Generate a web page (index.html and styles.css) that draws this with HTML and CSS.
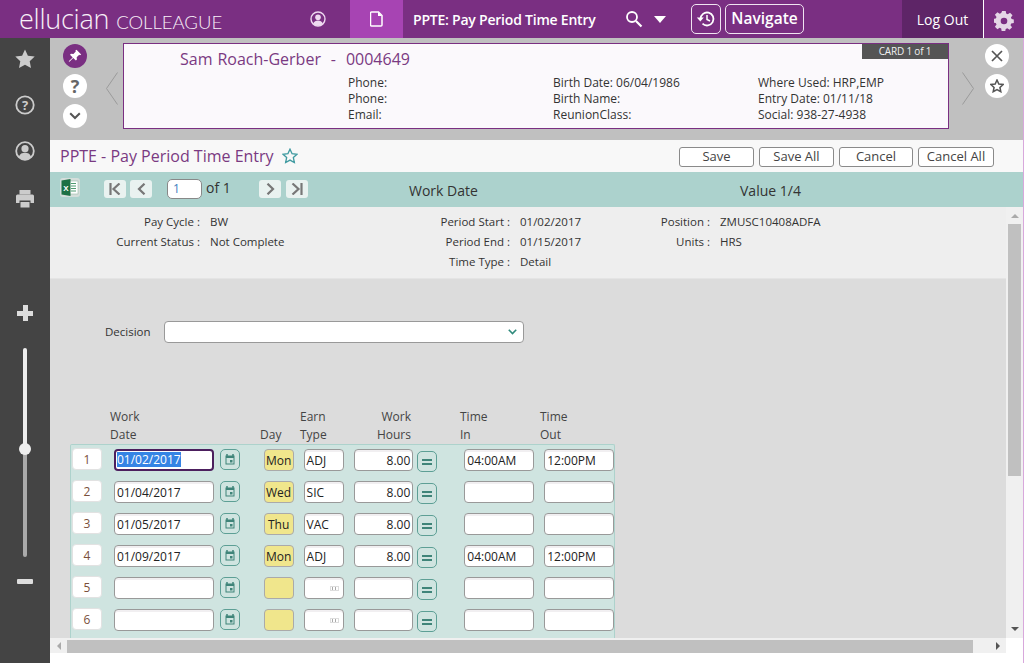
FILE: index.html
```html
<!DOCTYPE html>
<html lang="en">
<head>
<meta charset="UTF-8" />
<title>PPTE: Pay Period Time Entry</title>
<link rel="stylesheet" href="styles.css">
</head>
<body>

<header class="topbar">
  <div class="logo"><span class="logo-main">ellucian</span><span class="logo-sub">COLLEAGUE</span></div>
  <svg class="top-user" width="16" height="16" viewBox="0 0 16 16"><circle cx="8" cy="8" r="7" fill="none" stroke="#eed9f0" stroke-width="1.4"/><circle cx="8" cy="6.2" r="2.8" fill="#eed9f0"/><path d="M3 13c1-3 3-3.6 5-3.6s4 .6 5 3.6c-1.400 1.200-3 1.800-5 1.800s-3.600-.6-5-1.800z" fill="#eed9f0"/></svg>
  <div class="doc-tab"><svg width="13" height="16" viewBox="0 0 13 16"><path d="M1.500 1h7l3.500 3.500v9.500a1 1 0 0 1-1 1h-9.500a1 1 0 0 1-1-1v-12a1 1 0 0 1 1-1z" fill="none" stroke="#fff" stroke-width="1.500"/><path d="M8 1v4h4z" fill="#fff"/></svg></div>
  <div class="top-title">PPTE: Pay Period Time Entry</div>
  <svg class="top-search" width="18" height="18" viewBox="0 0 18 18"><circle cx="7" cy="7" r="5" fill="none" stroke="#fff" stroke-width="1.800"/><path d="M11 11l5.500 5.500" stroke="#fff" stroke-width="2.200"/></svg>
  <div class="top-caret"></div>
  <div class="top-history"><svg width="20" height="18" viewBox="0 0 20 18"><path d="M4.500 9a6.500 6.500 0 1 1 2 4.700" fill="none" stroke="#fff" stroke-width="1.800"/><path d="M0.800 7.500h7l-3.500 4z" fill="#fff"/><path d="M11 5v4.500l3 1.500" fill="none" stroke="#fff" stroke-width="1.500"/></svg></div>
  <div class="top-nav">Navigate</div>
  <div class="logout">Log Out</div>
  <div class="top-gear"><svg width="20" height="20" viewBox="0 0 20 20"><path d="M8 0h4l.5 3 1.800.8 2.500-1.800 2.800 2.800-1.800 2.500.8 1.700 2.400.5v4l-2.900.5-.8 1.800 1.800 2.400-2.800 2.800-2.500-1.800-1.800.8-.5 2.500h-4l-.5-3-1.700-.7-2.500 1.700-2.800-2.800 1.800-2.500-.8-1.800-3-.5v-4l3-.5.8-1.700-1.800-2.500 2.800-2.800 2.500 1.800 1.700-.8z" transform="scale(.9) translate(1 -.1)" fill="#e4d6e6"/><circle cx="10" cy="10" r="3.300" fill="#7a2f82"/></svg></div>
</header>

<div class="layout">
  <nav class="sidebar">
    <svg class="side-icon" width="20" height="20" viewBox="0 0 20 20"><path d="M10 .5l2.900 6.300 6.800.8-5 4.700 1.300 6.800-6-3.400-6 3.400 1.300-6.800-5-4.700 6.800-.8z" fill="#ccc"/></svg>
    <svg class="side-icon" width="20" height="20" viewBox="0 0 20 20"><circle cx="10" cy="10" r="8.700" fill="none" stroke="#ccc" stroke-width="1.800"/><text x="10" y="14.500" text-anchor="middle" font-size="13" font-weight="700" font-family="Open Sans" fill="#ccc">?</text></svg>
    <svg class="side-icon user-icon" width="20" height="20" viewBox="0 0 20 20"><circle cx="10" cy="10" r="8.800" fill="none" stroke="#ccc" stroke-width="1.800"/><circle cx="10" cy="7.700" r="3.600" fill="#ccc"/><path d="M3.800 16c1-3.400 3.500-4.300 6.200-4.300s5.200.9 6.200 4.300c-1.600 1.600-3.800 2.600-6.200 2.600s-4.600-1-6.200-2.600z" fill="#ccc"/></svg>
    <svg class="side-icon" width="20" height="20" viewBox="0 0 20 20"><path d="M4.500 1h11v4.500h-11z" fill="#ccc"/><path d="M1 7a1.500 1.500 0 0 1 1.500-1.500h15a1.500 1.500 0 0 1 1.500 1.500v7h-3.500v-2.500h-11v2.500h-3.500z" fill="#ccc"/><path d="M5.500 13h9v5.500h-9z" fill="#ccc"/></svg>
    <div class="zoom-plus"></div>
    <div class="zoom-track"><div class="zoom-knob"></div></div>
    <div class="zoom-minus"></div>
  </nav>

  <div class="content">
    <section class="card-strip">
      <div class="round-col">
        <div class="round round-pin"><svg width="14" height="14" viewBox="0 0 14 14"><path d="M8.500.8l4.700 4.700-1.200.7-.8-.4-2.500 2.400.2 2.400-1 1-2.700-2.700-3.500 3.700-.9.200.2-.9 3.700-3.500-2.700-2.700 1-1 2.400.2 2.400-2.500-.4-.8z" fill="#fff"/></svg></div>
        <div class="round round-q">?</div>
        <div class="round"><svg width="12" height="8" viewBox="0 0 12 8"><path d="M1.200 1.200l4.800 4.800 4.800-4.800" fill="none" stroke="#555" stroke-width="2"/></svg></div>
      </div>
      <svg class="chev chev-left" width="12" height="34" viewBox="0 0 12 34"><path d="M11.500 .5l-11 16 11 16" fill="none" stroke="#9a9a9a"/></svg>
      <div class="card">
        <div class="card-tag">CARD 1 of 1</div>
        <div class="card-name">Sam Roach-Gerber &nbsp;-&nbsp; 0004649</div>
        <div class="card-grid">
          <div>Phone:</div><div>Birth Date: 06/04/1986</div><div>Where Used: HRP,EMP</div>
          <div>Phone:</div><div>Birth Name:</div><div>Entry Date: 01/11/18</div>
          <div>Email:</div><div>ReunionClass:</div><div>Social: 938-27-4938</div>
        </div>
      </div>
      <svg class="chev chev-right" width="12" height="34" viewBox="0 0 12 34"><path d="M.5 .5l11 16-11 16" fill="none" stroke="#9a9a9a"/></svg>
      <div class="round-col round-col-right">
        <div class="round"><svg width="12" height="12" viewBox="0 0 12 12"><path d="M1 1l10 10M11 1l-10 10" stroke="#555" stroke-width="1.700"/></svg></div>
        <div class="round"><svg width="14" height="14" viewBox="0 0 20 20"><path d="M10 1.500l2.600 5.600 6.100.7-4.500 4.200 1.200 6.100-5.400-3-5.400 3 1.200-6.100-4.500-4.200 6.100-.7z" fill="none" stroke="#555" stroke-width="2.200"/></svg></div>
      </div>
    </section>

    <section class="title-bar">
      <h1 class="page-title">PPTE - Pay Period Time Entry</h1>
      <svg class="title-star" width="16" height="16" viewBox="0 0 20 20"><path d="M10 1.500l2.600 5.600 6.100.7-4.500 4.200 1.200 6.100-5.400-3-5.400 3 1.200-6.100-4.500-4.200 6.100-.7z" fill="none" stroke="#3f9aa0" stroke-width="1.700"/></svg>
      <div class="title-actions">
        <button class="btn btn-save">Save</button>
        <button class="btn btn-saveall">Save All</button>
        <button class="btn btn-cancel">Cancel</button>
        <button class="btn btn-cancelall">Cancel All</button>
      </div>
    </section>

    <section class="pager-bar">
      <svg class="excel" width="20" height="19" viewBox="0 0 20 19"><rect x="0" y="0" width="20" height="19" rx="3" fill="#d5dedb"/><rect x="9" y="3" width="9" height="13" fill="#fff" stroke="#9cb8a8" stroke-width=".6"/><path d="M11 5.500h5M11 8h5M11 10.500h5M11 13h5" stroke="#4f9a70"/><path d="M1.500 2.500l9-1.500v17l-9-1.500z" fill="#1d7044"/><text x="6" y="13" text-anchor="middle" font-family="Liberation Sans" font-weight="700" font-size="8" fill="#fff">X</text></svg>
      <div class="page-btn page-first"><svg width="12" height="12" viewBox="0 0 12 12"><path d="M1.500 0v12" stroke="#777" stroke-width="2.200"/><path d="M10.500 .5l-6 5.500 6 5.500" fill="none" stroke="#777" stroke-width="2.200"/></svg></div>
      <div class="page-btn page-prev"><svg width="9" height="12" viewBox="0 0 9 12"><path d="M7.500 .7l-5.500 5.300 5.500 5.300" fill="none" stroke="#777" stroke-width="2.200"/></svg></div>
      <div class="page-input">1</div>
      <div class="page-of">of 1</div>
      <div class="page-btn page-next"><svg width="9" height="12" viewBox="0 0 9 12"><path d="M1.500 .7l5.500 5.300-5.500 5.300" fill="none" stroke="#777" stroke-width="2.200"/></svg></div>
      <div class="page-btn page-last"><svg width="12" height="12" viewBox="0 0 12 12"><path d="M10.500 0v12" stroke="#777" stroke-width="2.200"/><path d="M1.500 .5l6 5.500-6 5.500" fill="none" stroke="#777" stroke-width="2.200"/></svg></div>
      <div class="pager-date">Work Date</div>
      <div class="pager-value">Value 1/4</div>
    </section>

    <div class="scroll-wrap">
      <div class="scroll-main">
        <section class="info">
          <div class="info-col info-col-1">
            <div class="info-row"><span class="info-label">Pay Cycle :</span><span>BW</span></div>
            <div class="info-row"><span class="info-label">Current Status :</span><span>Not Complete</span></div>
          </div>
          <div class="info-col info-col-2">
            <div class="info-row"><span class="info-label">Period Start :</span><span>01/02/2017</span></div>
            <div class="info-row"><span class="info-label">Period End :</span><span>01/15/2017</span></div>
            <div class="info-row"><span class="info-label">Time Type :</span><span>Detail</span></div>
          </div>
          <div class="info-col info-col-3">
            <div class="info-row"><span class="info-label">Position :</span><span>ZMUSC10408ADFA</span></div>
            <div class="info-row"><span class="info-label">Units :</span><span>HRS</span></div>
          </div>
        </section>

        <section class="form-area">
          <div class="decision">
            <label class="decision-label">Decision</label>
            <div class="decision-select"><svg width="9" height="6" viewBox="0 0 9 6"><path d="M.8 .8l3.700 3.700 3.700-3.700" fill="none" stroke="#2f8a7c" stroke-width="1.600"/></svg></div>
          </div>

          <div class="grid-head">
            <div class="h-date">Work<br>Date</div>
            <div class="h-day"><br>Day</div>
            <div class="h-earn">Earn<br>Type</div>
            <div class="h-hours">Work<br>Hours</div>
            <div class="h-in">Time<br>In</div>
            <div class="h-out">Time<br>Out</div>
          </div>

          <div class="grid-panel" id="rows"></div>
        </section>
      </div>
      <div class="vscroll">
        <div class="arrow-up"></div>
        <div class="vthumb"></div>
        <div class="arrow-down"></div>
      </div>
    </div>

    <div class="hscroll">
      <div class="arrow-left"></div>
      <div class="hthumb"></div>
      <div class="arrow-right"></div>
    </div>
  </div>
</div>

<script>
  const data = [
    { date: '01/02/2017', day: 'Mon', earn: 'ADJ', hours: '8.00', tin: '04:00AM', tout: '12:00PM' },
    { date: '01/04/2017', day: 'Wed', earn: 'SIC', hours: '8.00', tin: '', tout: '' },
    { date: '01/05/2017', day: 'Thu', earn: 'VAC', hours: '8.00', tin: '', tout: '' },
    { date: '01/09/2017', day: 'Mon', earn: 'ADJ', hours: '8.00', tin: '04:00AM', tout: '12:00PM' },
    { date: '', day: '', earn: '', hours: '', tin: '', tout: '' },
    { date: '', day: '', earn: '', hours: '', tin: '', tout: '' }
  ];
  const calIcon = '<svg width="10" height="11" viewBox="0 0 10 11"><path d="M2 0v2M8 0v2" stroke="#3f8479" stroke-width="1.500"/><path d="M.5 1.500h9v9h-9z" fill="#3f8479"/><path d="M1.500 4h7v5.500h-7z" fill="#cfe4e0"/><path d="M5 6h2.500v2.500h-2.500z" fill="#3f8479"/></svg>';

  // build the six entry rows
  document.getElementById('rows').innerHTML = data.map((r, i) => `
    <div class="row">
      <div class="cell cell-num">${i + 1}</div>
      <div class="cell cell-date${i === 0 ? ' is-focus' : ''}">${i === 0 ? '<span class="sel">' + r.date + '</span>' : r.date}</div>
      <div class="mini mini-cal">${calIcon}</div>
      <div class="cell cell-day">${r.day}</div>
      <div class="cell cell-earn">${r.earn || '<span class="dots"></span>'}</div>
      <div class="cell cell-hours">${r.hours}</div>
      <div class="mini mini-eq"><span class="eq"></span></div>
      <div class="cell cell-in">${r.tin}</div>
      <div class="cell cell-out">${r.tout}</div>
    </div>`).join('');
</script>

</body>
</html>
```
FILE: styles.css
```css
* {
  box-sizing: border-box;
}
html, body {
  height: 100%;
}
body {
  margin: 0;
  font-family: 'Open Sans', sans-serif;
  font-size: 12px;
  color: #333;
  overflow: hidden;
  background: #fff;
}

/* top bar */
.topbar {
  height: 38px;
  background: #7a2f82;
  display: flex;
  align-items: center;
  color: #fff;
}
.logo {
  margin-left: 19px;
  width: 280px;
  display: flex;
  align-items: baseline;
  white-space: nowrap;
  font-family: 'Lato', sans-serif;
  font-weight: 300;
  color: #f8f0f8;
}
.logo-main {
  font-size: 27px;
  line-height: 30px;
  font-family: 'Open Sans', sans-serif;
  letter-spacing: -0.25px;
}
.logo-sub {
  font-size: 18.5px;
  line-height: 24px;
  margin-left: 7px;
}
.top-user {
  margin-left: 11px;
}
.doc-tab {
  margin-left: 24px;
  width: 53px;
  height: 38px;
  background: #a744b3;
  display: flex;
  align-items: center;
  justify-content: center;
}
.top-title {
  margin-left: 10px;
  width: 212px;
  font-size: 14px;
  font-weight: 600;
  letter-spacing: -0.22px;
  white-space: nowrap;
}
.top-caret {
  margin-left: 11px;
  width: 0;
  height: 0;
  border-left: 6.500px solid transparent;
  border-right: 6.500px solid transparent;
  border-top: 7px solid #fff;
}
.top-history {
  margin-left: 25px;
  width: 30px;
  height: 30px;
  border: 1px solid #f0e4f1;
  border-radius: 5px;
  display: flex;
  align-items: center;
  justify-content: center;
}
.top-nav {
  margin-left: 4px;
  width: 79px;
  height: 30px;
  border: 1px solid #f0e4f1;
  border-radius: 5px;
  font-size: 15.500px;
  font-weight: 600;
  text-align: center;
  line-height: 26px;
}
.logout {
  margin-left: 98px;
  width: 81px;
  height: 38px;
  background: #5e2567;
  text-align: center;
  font-size: 14px;
  line-height: 40px;
}
.top-gear {
  width: 41px;
  height: 38px;
  border-left: 1px solid #fff;
  display: flex;
  align-items: center;
  justify-content: center;
  padding-top: 3px;
}

/* page */
.layout {
  display: flex;
  height: 625px;
}
.sidebar {
  width: 50px;
  flex: none;
  background: #444;
  display: flex;
  flex-direction: column;
  align-items: center;
  padding-top: 11px;
}
.side-icon {
  margin-bottom: 26px;
}
.user-icon {
  margin-bottom: 28px;
}
.zoom-plus {
  width: 16px;
  height: 16px;
  margin-top: 70px;
  background:
    linear-gradient(#ddd, #ddd) center / 16px 5px no-repeat,
    linear-gradient(#ddd, #ddd) center / 5px 16px no-repeat;
}
.zoom-track {
  position: relative;
  width: 4px;
  height: 209px;
  margin-top: 27px;
  border-radius: 2px;
  background: linear-gradient(#eee 0, #eee 48%, #aaa 48%, #aaa 100%);
}
.zoom-knob {
  position: absolute;
  left: -4px;
  top: 95px;
  width: 12px;
  height: 12px;
  border-radius: 50%;
  background: #eee;
}
.zoom-minus {
  width: 16px;
  height: 5px;
  margin-top: 22px;
  background: #ddd;
  border-radius: 1px;
}

.content {
  flex: 1;
  min-width: 0;
  display: flex;
  flex-direction: column;
  border-right: 1px solid #d8a8dc;
  background: #fff;
}

/* person card */
.card-strip {
  height: 102px;
  flex: none;
  background: #c0c0c0;
  display: flex;
  align-items: flex-start;
}
.round-col {
  margin-left: 13px;
  padding-top: 6px;
  display: flex;
  flex-direction: column;
  gap: 6px;
}
.round-col-right {
  margin-left: 11px;
}
.round {
  width: 24px;
  height: 24px;
  border-radius: 50%;
  background: #fff;
  display: flex;
  align-items: center;
  justify-content: center;
}
.round-pin {
  background: #7a2f82;
}
.round-q {
  font-size: 18px;
  font-weight: 700;
  color: #666;
}
.chev {
  margin-top: 34px;
  flex: none;
}
.chev-left {
  margin-left: 19px;
  margin-right: 5px;
}
.chev-right {
  margin-left: 13px;
}
.card {
  position: relative;
  margin-top: 5px;
  width: 826px;
  height: 86px;
  border: 1px solid #7a2f82;
  background: #fbf9fc;
  padding: 5px 0 0 56px;
}
.card-tag {
  position: absolute;
  right: 0;
  top: 0;
  width: 86px;
  height: 15px;
  background: #555;
  color: #f0f0f0;
  font-size: 10px;
  line-height: 15px;
  text-align: center;
  letter-spacing: -0.2px;
}
.card-name {
  font-size: 16px;
  color: #7a3a82;
  line-height: 20px;
  word-spacing: 0.8px;
}
.card-grid {
  margin: 6px 0 0 168px;
  display: grid;
  grid-template-columns: 205px 205px 200px;
  line-height: 16px;
  color: #333;
}

/* title bar */
.title-bar {
  height: 32px;
  flex: none;
  background: #f8f8f8;
  display: flex;
  align-items: center;
  padding-left: 10px;
}
.page-title {
  margin: 0;
  font-size: 16px;
  font-weight: 400;
  color: #7a3a82;
  white-space: nowrap;
}
.title-star {
  margin-left: 8px;
}
.title-actions {
  margin-left: auto;
  margin-right: 29px;
  margin-top: 1px;
  display: flex;
  gap: 5px;
}
.btn {
  height: 20px;
  padding: 0;
  border: 1px solid #8a8a8a;
  border-radius: 3px;
  background: #fff;
  color: #444;
  font-family: inherit;
  font-size: 13px;
  line-height: 17px;
}
.btn-save {
  width: 75px;
}
.btn-saveall {
  width: 75px;
}
.btn-cancel {
  width: 74px;
}
.btn-cancelall {
  width: 76px;
}

/* pager */
.pager-bar {
  height: 35px;
  flex: none;
  background: #acd2cd;
  display: flex;
  align-items: center;
  padding: 0 0 2px 10px;
}
.excel {
  margin-top: -2px;
}
.page-btn {
  width: 22px;
  height: 18px;
  border-radius: 3px;
  background: #e9f2f0;
  display: flex;
  align-items: center;
  justify-content: center;
}
.page-first {
  margin-left: 24px;
}
.page-prev {
  margin-left: 4px;
}
.page-input {
  margin-left: 15px;
  width: 35px;
  height: 20px;
  border: 1px solid #888;
  border-radius: 5px;
  background: #fff;
  color: #3e7fc0;
  padding-left: 5px;
  line-height: 18px;
}
.page-of {
  margin-left: 4px;
  width: 53px;
  font-size: 14px;
  margin-top: -2px;
}
.page-last {
  margin-left: 5px;
}
.pager-date {
  margin-left: 101px;
  width: 200px;
  font-size: 14px;
  padding-top: 3px;
}
.pager-value {
  margin-left: 131px;
  font-size: 14px;
  padding-top: 3px;
}

.scroll-wrap {
  flex: 1;
  min-height: 0;
  display: flex;
}
.scroll-main {
  flex: 1;
  min-width: 0;
  display: flex;
  flex-direction: column;
  overflow: hidden;
}

/* summary */
.info {
  height: 72px;
  flex: none;
  background: #eee;
  display: flex;
  padding-top: 5px;
  border-bottom: 1px solid #e4e4e4;
  font-size: 11.500px;
}
.info-col {
  display: flex;
  flex-direction: column;
  flex: none;
}
.info-row {
  display: flex;
  line-height: 20px;
  height: 20px;
  white-space: nowrap;
}
.info-row > span:last-child {
  margin-left: 10px;
}
.info-label {
  flex: none;
  text-align: right;
}
.info-col-1 {
  width: 280px;
}
.info-col-1 .info-label {
  width: 150px;
}
.info-col-2 {
  width: 230px;
}
.info-col-2 .info-label {
  width: 180px;
}
.info-col-3 .info-label {
  width: 150px;
}

/* form */
.form-area {
  flex: 1;
  min-height: 0;
  background: #dcdcdc;
  padding-left: 20px;
  overflow: hidden;
}
.decision {
  display: flex;
  align-items: center;
  margin-top: 42px;
}
.decision-label {
  margin: -2px 0 0 35px;
  width: 59px;
  font-size: 11.500px;
}
.decision-select {
  width: 360px;
  height: 22px;
  border: 1px solid #999;
  border-radius: 4px;
  background: #fff;
  display: flex;
  align-items: center;
  justify-content: flex-end;
  padding-right: 6px;
}
.grid-head {
  display: flex;
  height: 36px;
  margin-top: 65px;
  line-height: 18px;
  color: #444;
}
.h-date {
  margin-left: 40px;
  width: 150px;
}
.h-day {
  width: 40px;
}
.h-earn {
  width: 60px;
}
.h-hours {
  width: 51px;
  text-align: right;
}
.h-in {
  margin-left: 49px;
  width: 80px;
}
.h-out {
  width: 60px;
}
.grid-panel {
  width: 545px;
  height: 200px;
  padding: 1px 0 0 1px;
  background: #cfe4e0;
  border: 1px solid #add2cc;
  border-bottom: 0;
  border-radius: 2px 2px 0 0;
}
.row {
  display: flex;
  align-items: flex-start;
  height: 32px;
  padding-top: 2px;
}
.cell {
  height: 22px;
  margin-top: 1px;
  border: 1px solid #999;
  border-radius: 4px;
  background: #fff;
  line-height: 21px;
  color: #222;
  padding-left: 2px;
  white-space: nowrap;
  overflow: hidden;
  box-shadow: inset 0 2px 0 #f1eff1;
}
.cell-num {
  margin-top: 0;
  width: 30px;
  text-align: center;
  padding: 0;
  border-color: #e2e2e2;
  color: #7a4f3a;
  box-shadow: none;
}
.cell-date {
  margin-left: 12px;
  width: 100px;
}
.is-focus {
  border: 2px solid #4c1f5e;
  padding-left: 1px;
  line-height: 18px;
  box-shadow: none;
}
.sel {
  background: #3584e4;
  color: #fff;
  display: inline-block;
  line-height: 15px;
}
.mini {
  width: 20px;
  height: 21px;
  border: 1px solid #5d9f95;
  border-radius: 5px;
  background: #cfe4e0;
  display: flex;
  align-items: center;
  justify-content: center;
}
.mini-cal {
  margin-left: 6px;
  margin-top: 1px;
}
.cell-day {
  margin-left: 24px;
  width: 30px;
  background: #f0e68c;
  border-color: #aaa;
  padding: 0;
  text-align: center;
  box-shadow: none;
}
.cell-earn {
  position: relative;
  margin-left: 10px;
  width: 40px;
}
.dots {
  position: absolute;
  right: 4px;
  top: 8px;
  width: 9px;
  height: 5px;
  border: 1px solid #ddd;
  background: repeating-linear-gradient(90deg, #fff 0 1px, #aaa 1px 2px, #fff 2px 3px);
}
.cell-hours {
  margin-left: 10px;
  width: 60px;
  text-align: right;
  padding: 0 2px 0 0;
}
.mini-eq {
  margin-left: 4px;
  margin-top: 3px;
}
.eq {
  width: 10px;
  height: 6px;
  border-top: 2px solid #3f8479;
  border-bottom: 2px solid #3f8479;
}
.cell-in {
  margin-left: 27px;
  width: 70px;
}
.cell-out {
  margin-left: 10px;
  width: 70px;
}

/* scrollbars */
.vscroll {
  width: 17px;
  flex: none;
  background: #f0f0f0;
  display: flex;
  flex-direction: column;
  align-items: center;
  padding-top: 7px;
}
.arrow-up {
  width: 0;
  height: 0;
  border-left: 4px solid transparent;
  border-right: 4px solid transparent;
  border-bottom: 4px solid #aaa;
}
.vthumb {
  width: 13px;
  height: 252px;
  margin-top: 6px;
  background: #c0c0c0;
}
.arrow-down {
  margin-top: auto;
  margin-bottom: 7px;
  width: 0;
  height: 0;
  border-left: 4px solid transparent;
  border-right: 4px solid transparent;
  border-top: 4px solid #555;
}
.hscroll {
  height: 15px;
  flex: none;
  width: 956px;
  background: #f0f0f0;
  display: flex;
  align-items: flex-end;
  margin-bottom: 10px;
}
.arrow-left {
  align-self: center;
  margin-left: 7px;
  width: 0;
  height: 0;
  border-top: 4px solid transparent;
  border-bottom: 4px solid transparent;
  border-right: 4px solid #aaa;
}
.hthumb {
  margin-left: 6px;
  width: 906px;
  height: 13px;
  background: #c0c0c0;
}
.arrow-right {
  align-self: center;
  margin-left: 23px;
  width: 0;
  height: 0;
  border-top: 4px solid transparent;
  border-bottom: 4px solid transparent;
  border-left: 4px solid #555;
}
```
